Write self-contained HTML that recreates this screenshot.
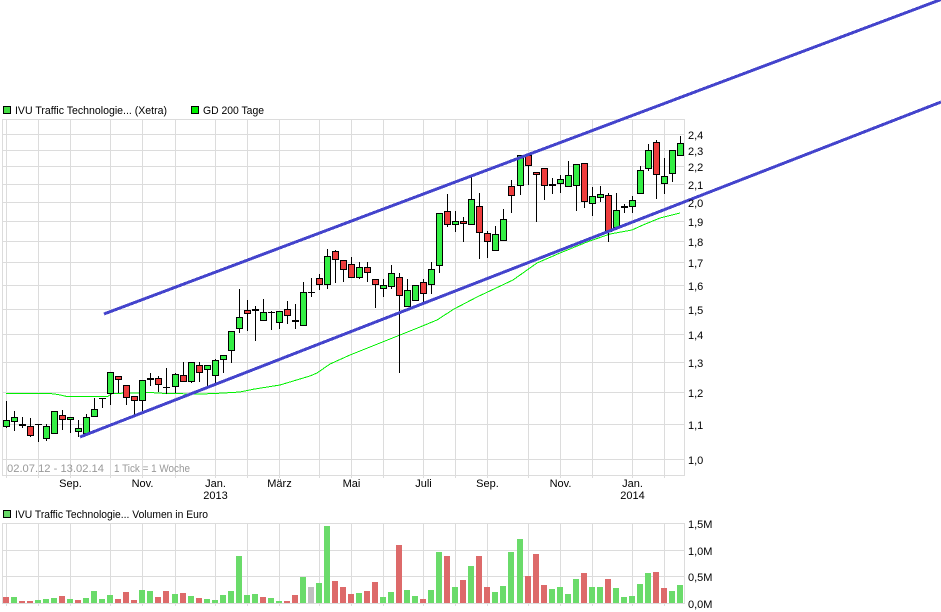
<!DOCTYPE html>
<html><head><meta charset="utf-8"><style>
html,body{margin:0;padding:0;background:#fff;width:941px;height:612px;overflow:hidden}
svg{display:block}
text{font-family:"Liberation Sans",sans-serif;font-size:11px;fill:#000}
.g{fill:#999}
.m{text-anchor:middle}
</style></head><body>
<svg width="941" height="612" viewBox="0 0 941 612" xmlns="http://www.w3.org/2000/svg">
<g fill="none" stroke="#dcdcdc" stroke-width="1" shape-rendering="crispEdges">
<path d="M2.5 119.5H684.5V475.5H2.5ZM2.5 134.5H684M2.5 150.5H684M2.5 166.5H684M2.5 184.5H684M2.5 202.5H684M2.5 221.5H684M2.5 241.5H684M2.5 262.5H684M2.5 285.5H684M2.5 309.5H684M2.5 334.5H684M2.5 362.5H684M2.5 392.5H684M2.5 424.5H684M2.5 459.5H684"/>
<path d="M6.5 119V478M38.5 119V478M70.5 119V478M110.5 119V478M142.5 119V478M175.5 119V478M215.5 119V478M247.5 119V478M279.5 119V478M319.5 119V478M351.5 119V478M383.5 119V478M423.5 119V478M455.5 119V478M487.5 119V478M528.5 119V478M560.5 119V478M592.5 119V478M632.5 119V478M664.5 119V478"/>
<path d="M2.5 523.5H684.5V603.5H2.5ZM2.5 550.5H684M2.5 576.5H684"/>
<path d="M6.5 523V606M38.5 523V606M70.5 523V606M110.5 523V606M142.5 523V606M175.5 523V606M215.5 523V606M247.5 523V606M279.5 523V606M319.5 523V606M351.5 523V606M383.5 523V606M423.5 523V606M455.5 523V606M487.5 523V606M528.5 523V606M560.5 523V606M592.5 523V606M632.5 523V606M664.5 523V606"/>
</g>
<path fill="none" stroke="#00f000" stroke-width="1" shape-rendering="crispEdges" d="M6 393.5H50L58 394.5L66 396.3H108L112 393.5L150 392.5L166 393.5L200 394L215 393.5L240 392L253 389.3L280 385L310 376L317 373L330 364L350 355L370 347L400 335L420 327L437 320L454 309L477 297L513 280L537 263L560 253L587 242L610 234L632 230L643 225L660 218L680 213"/>
<path fill="none" stroke="#000" stroke-width="1" shape-rendering="crispEdges" d="M6.5 401V428M14.5 411V431M22.5 417V428M30.5 418V437M38.5 424V442M46.5 424V441M54.5 411V434M62.5 410V430M70.5 417V433M78.5 420V437M86.5 414V434M94.5 398V417M102.5 398V408M110.5 372V405M118.5 376V393M126.5 385V405M134.5 396V415M142.5 380V411M150.5 373V386M158.5 376V392M166.5 368V394M175.5 373V393M183.5 362V382M191.5 362V383M199.5 362V382M207.5 365V386M215.5 359V383M223.5 355V373M231.5 331V363M239.5 289V333M247.5 300V331M255.5 306V341M263.5 299V321M271.5 311V330M279.5 311V329M287.5 301V324M295.5 304V329M303.5 282V326M311.5 278V297M319.5 274V290M327.5 249V289M335.5 250V283M343.5 260V282M351.5 257V278M359.5 262V279M367.5 262V282M375.5 279V308M383.5 279V297M391.5 265V289M399.5 273V373M407.5 279V307M415.5 285V301M423.5 279V302M431.5 262V294M439.5 213V273M447.5 194V227M455.5 211V232M463.5 217V242M471.5 177V225M479.5 193V259M487.5 231V258M495.5 226V251M503.5 209V241M511.5 180V213M520.5 155V195M528.5 155V185M536.5 172V222M544.5 168V200M552.5 178V194M560.5 175V193M568.5 161V187M576.5 164V211M584.5 163V208M592.5 187V216M600.5 186V202M608.5 193V242M616.5 193V228M624.5 204V213M632.5 196V213M640.5 166V194M648.5 144V171M656.5 140V199M664.5 158V194M672.5 150V182M680.5 136V156"/>
<path fill="none" stroke="#000" stroke-width="1" shape-rendering="crispEdges" d="M35 424.5h7M99 398.5h7M163 387.5h7M268 312.5h7M308 292.5h7"/>
<path fill="none" stroke="#000" stroke-width="2" shape-rendering="crispEdges" d="M147 379h7M252 310h7M292 321h7M621 207h7"/>
<path fill="#33ee44" stroke="#000" stroke-width="1" shape-rendering="crispEdges" d="M3.5 420.5h6v6h-6zM11.5 417.5h6v4h-6zM43.5 426.5h6v12h-6zM51.5 411.5h6v22h-6zM67.5 417.5h6v2h-6zM75.5 428.5h6v3h-6zM83.5 417.5h6v16h-6zM91.5 409.5h6v7h-6zM107.5 372.5h6v21h-6zM139.5 380.5h6v20h-6zM172.5 374.5h6v12h-6zM188.5 362.5h6v19h-6zM204.5 365.5h6v4h-6zM212.5 360.5h6v15h-6zM220.5 355.5h6v4h-6zM228.5 331.5h6v19h-6zM236.5 317.5h6v11h-6zM260.5 312.5h6v8h-6zM276.5 311.5h6v11h-6zM300.5 292.5h6v33h-6zM324.5 256.5h6v28h-6zM356.5 267.5h6v10h-6zM380.5 285.5h6v3h-6zM388.5 273.5h6v13h-6zM404.5 290.5h6v16h-6zM412.5 285.5h6v15h-6zM428.5 269.5h6v15h-6zM436.5 213.5h6v52h-6zM452.5 221.5h6v3h-6zM468.5 199.5h6v25h-6zM492.5 234.5h6v16h-6zM500.5 219.5h6v21h-6zM517.5 155.5h6v30h-6zM549.5 184.5h6v1h-6zM557.5 179.5h6v4h-6zM565.5 175.5h6v11h-6zM573.5 164.5h6v21h-6zM589.5 196.5h6v7h-6zM597.5 194.5h6v3h-6zM613.5 210.5h6v17h-6zM629.5 200.5h6v6h-6zM637.5 170.5h6v23h-6zM645.5 150.5h6v18h-6zM661.5 176.5h6v7h-6zM669.5 150.5h6v23h-6zM677.5 143.5h6v12h-6z"/>
<path fill="#ee3d3d" stroke="#000" stroke-width="1" shape-rendering="crispEdges" d="M19.5 424.5h6v1h-6zM27.5 426.5h6v9h-6zM59.5 415.5h6v4h-6zM115.5 376.5h6v3h-6zM123.5 385.5h6v12h-6zM131.5 396.5h6v4h-6zM155.5 378.5h6v6h-6zM180.5 375.5h6v6h-6zM196.5 365.5h6v7h-6zM244.5 310.5h6v3h-6zM284.5 309.5h6v6h-6zM316.5 278.5h6v6h-6zM332.5 251.5h6v8h-6zM340.5 260.5h6v9h-6zM348.5 264.5h6v13h-6zM364.5 267.5h6v5h-6zM372.5 279.5h6v5h-6zM396.5 277.5h6v18h-6zM420.5 282.5h6v11h-6zM444.5 211.5h6v13h-6zM460.5 221.5h6v2h-6zM476.5 206.5h6v26h-6zM484.5 233.5h6v8h-6zM508.5 186.5h6v9h-6zM525.5 155.5h6v10h-6zM533.5 172.5h6v2h-6zM541.5 168.5h6v17h-6zM581.5 163.5h6v38h-6zM605.5 195.5h6v36h-6zM653.5 142.5h6v32h-6z"/>
<path fill="none" stroke="#4444cc" stroke-width="3" shape-rendering="crispEdges" d="M104 314L941 -0.5M80 437L941 102"/>
<path fill="#6adb6a" shape-rendering="crispEdges" d="M11 597h6V603h-6zM35 600h6V603h-6zM43 599h6V603h-6zM51 598h6V603h-6zM67 599h6V603h-6zM83 598h6V603h-6zM91 591h6V603h-6zM99 599h6V603h-6zM107 595h6V603h-6zM139 590h6V603h-6zM147 591h6V603h-6zM172 594h6V603h-6zM188 596h6V603h-6zM204 599h6V603h-6zM212 600h6V603h-6zM220 595h6V603h-6zM228 591h6V603h-6zM236 556h6V603h-6zM244 595h6V603h-6zM252 594h6V603h-6zM268 598h6V603h-6zM276 601h6V603h-6zM300 577h6V603h-6zM316 583h6V603h-6zM324 526h6V603h-6zM356 593h6V603h-6zM380 597h6V603h-6zM388 592h6V603h-6zM404 590h6V603h-6zM412 596h6V603h-6zM428 590h6V603h-6zM436 552h6V603h-6zM452 587h6V603h-6zM468 566h6V603h-6zM492 592h6V603h-6zM500 586h6V603h-6zM508 552h6V603h-6zM517 539h6V603h-6zM549 589h6V603h-6zM557 587h6V603h-6zM565 594h6V603h-6zM573 579h6V603h-6zM589 587h6V603h-6zM597 587h6V603h-6zM613 588h6V603h-6zM621 597h6V603h-6zM629 596h6V603h-6zM637 584h6V603h-6zM645 573h6V603h-6zM669 591h6V603h-6zM677 585h6V603h-6z"/>
<path fill="#dd6a6a" shape-rendering="crispEdges" d="M3 597h6V603h-6zM19 601h6V603h-6zM27 601h6V603h-6zM59 596h6V603h-6zM75 600h6V603h-6zM115 599h6V603h-6zM123 592h6V603h-6zM131 600h6V603h-6zM155 597h6V603h-6zM163 591h6V603h-6zM180 593h6V603h-6zM196 598h6V603h-6zM260 597h6V603h-6zM284 601h6V603h-6zM292 595h6V603h-6zM332 581h6V603h-6zM340 587h6V603h-6zM348 594h6V603h-6zM364 591h6V603h-6zM372 582h6V603h-6zM396 545h6V603h-6zM420 599h6V603h-6zM444 556h6V603h-6zM460 580h6V603h-6zM476 556h6V603h-6zM484 587h6V603h-6zM525 576h6V603h-6zM533 554h6V603h-6zM541 585h6V603h-6zM581 573h6V603h-6zM605 579h6V603h-6zM653 572h6V603h-6zM661 588h6V603h-6z"/>
<rect x="308" y="587" width="6" height="16" fill="#c0c0c0" shape-rendering="crispEdges"/>
<rect x="3.5" y="106.5" width="7" height="7" fill="#44dd44" stroke="#000" shape-rendering="crispEdges"/>
<rect x="191.5" y="106.5" width="7" height="7" fill="#00f000" stroke="#000" shape-rendering="crispEdges"/>
<rect x="3.5" y="510.5" width="7" height="7" fill="#66d866" stroke="#000" shape-rendering="crispEdges"/>
<text x="15" y="114" textLength="152" lengthAdjust="spacingAndGlyphs">IVU Traffic Technologie... (Xetra)</text>
<text x="203" y="114" textLength="61" lengthAdjust="spacingAndGlyphs">GD 200 Tage</text>
<text x="15" y="518" textLength="193" lengthAdjust="spacingAndGlyphs">IVU Traffic Technologie... Volumen in Euro</text>
<text class="g" x="7" y="472" textLength="97" lengthAdjust="spacingAndGlyphs">02.07.12 - 13.02.14</text>
<text class="g" x="114" y="472" textLength="76" lengthAdjust="spacingAndGlyphs">1 Tick = 1 Woche</text>
<text x="688" y="139">2,4</text><text x="688" y="155">2,3</text><text x="688" y="171">2,2</text><text x="688" y="189">2,1</text><text x="688" y="207">2,0</text><text x="688" y="226">1,9</text><text x="688" y="246">1,8</text><text x="688" y="267">1,7</text><text x="688" y="290">1,6</text><text x="688" y="314">1,5</text><text x="688" y="339">1,4</text><text x="688" y="367">1,3</text><text x="688" y="397">1,2</text><text x="688" y="429">1,1</text><text x="688" y="464">1,0</text>
<text class="m" x="70.5" y="487">Sep.</text><text class="m" x="142.5" y="487">Nov.</text><text class="m" x="215.5" y="487">Jan.</text><text class="m" x="215.5" y="499">2013</text><text class="m" x="279.5" y="487">März</text><text class="m" x="351.5" y="487">Mai</text><text class="m" x="423.5" y="487">Juli</text><text class="m" x="487.5" y="487">Sep.</text><text class="m" x="560.5" y="487">Nov.</text><text class="m" x="632.5" y="487">Jan.</text><text class="m" x="632.5" y="499">2014</text>
<text x="688" y="528">1,5M</text><text x="688" y="555">1,0M</text><text x="688" y="581">0,5M</text><text x="688" y="608">0,0M</text>
</svg>
</body></html>
